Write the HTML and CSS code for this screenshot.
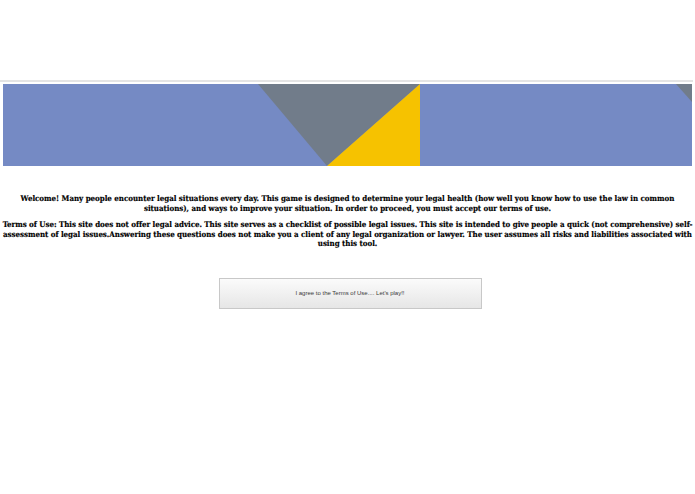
FILE: index.html
```html
<!DOCTYPE html>
<html>
<head>
<meta charset="utf-8">
<link rel="stylesheet" href="styles.css">
</head>
<body>
<div class="top"></div>
<div class="rule"></div>
<div class="banner">
  <svg class="banner-art" viewBox="0 0 689 82" width="689" height="82" preserveAspectRatio="none">
    <rect x="0" y="0" width="689" height="82" fill="#758ac4"/>
    <polygon points="255,0 417,0 324,82" fill="#717c8a"/>
    <polygon points="417,0 417,82 324,82" fill="#f6c200"/>
    <polygon points="673,0 689,0 689,18" fill="#717c8a"/>
  </svg>
</div>
<div class="content">
  <p class="intro">Welcome! Many people encounter legal situations every day. This game is designed to determine your legal health (how well you know how to use the law in common situations), and ways to improve your situation. In order to proceed, you must accept our terms of use.</p>
  <p class="terms">Terms of Use: This site does not offer legal advice. This site serves as a checklist of possible legal issues. This site is intended to give people a quick (not comprehensive) self-assessment of legal issues.Answering these questions does not make you a client of any legal organization or lawyer. The user assumes all risks and liabilities associated with using this tool.</p>
  <div class="actions">
    <button class="agree">I agree to the Terms of Use.... Let's play!!</button>
  </div>
</div>
</body>
</html>
```
FILE: styles.css
```css
html, body {
  margin: 0;
  padding: 0;
  background: #fff;
}
.top {
  height: 80px;
}
.rule {
  height: 2px;
  background: #e4e4e4;
  margin-right: 2px;
}
.banner {
  margin: 2px 3px 0 3px;
  height: 82px;
}
.banner-art {
  display: block;
}
.content {
  padding: 0;
}
.intro, .terms {
  font-family: "DejaVu Serif Condensed", "DejaVu Serif", serif;
  font-weight: bold;
  font-size: 7.9px;
  letter-spacing: -0.03px;
  line-height: 9.5px;
  text-align: center;
  color: #000;
  margin: 0;
  -webkit-text-stroke: 0.15px #000;
}
.intro {
  margin-top: 28px;
}
.terms {
  margin-top: 7px;
}
.actions {
  display: flex;
  justify-content: center;
  margin-top: 29px;
  padding-left: 5px;
}
.agree {
  width: 263px;
  height: 31px;
  border: 1px solid #c8c8c8;
  background: linear-gradient(#fbfbfb, #e6e6e6);
  font-family: "Liberation Sans", Arial, sans-serif;
  font-size: 6px;
  color: #3a3a3a;
  padding: 0;
}
```
